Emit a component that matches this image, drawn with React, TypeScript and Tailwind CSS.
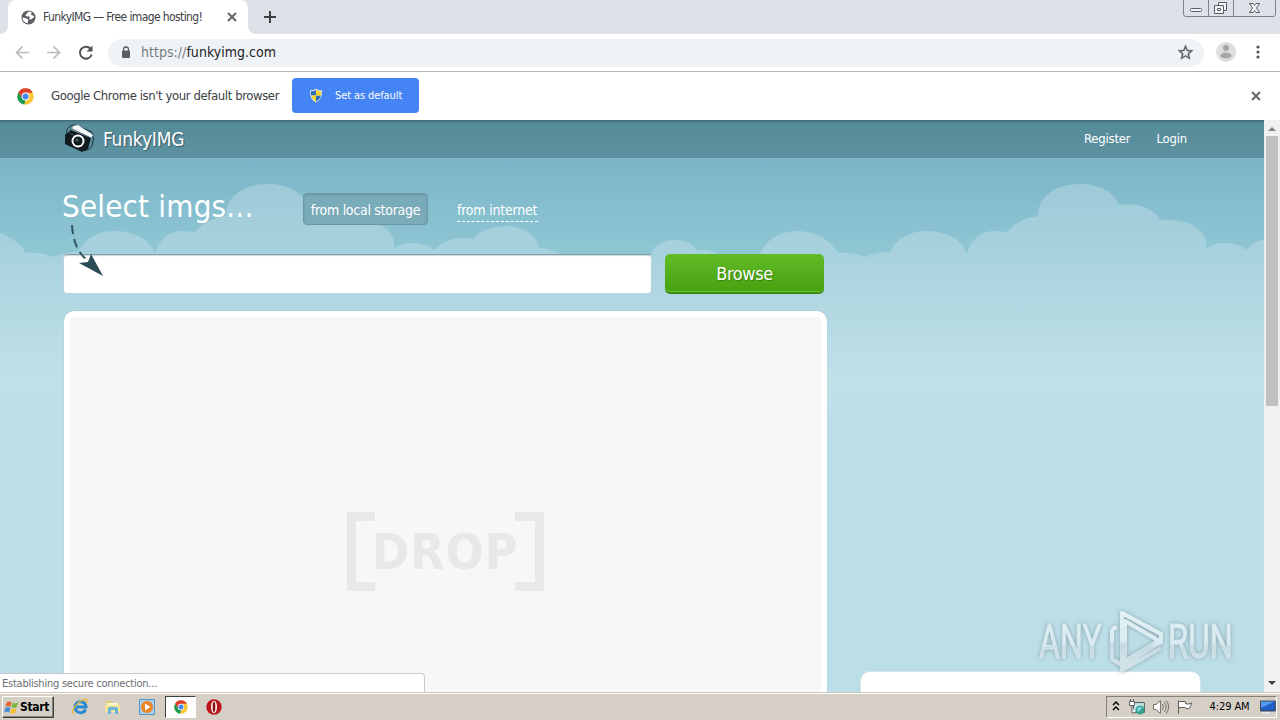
const hill =
  "M0 112C11 116 20 122 26 132C37 131 46 133 53 136C60 133 69 131 78 131C85 117 98 110 115 110C135 110 150 119 155 133C159 118 169 110 183 110L195 111C203 102 214 96 226 95C226 75 244 63 268 63C287 63 302 71 307 84C324 81 342 87 348 99C370 97 397 105 394 128C404 120 424 120 434 129C441 120 457 115 474 118C480 109 492 105 506 105C524 105 537 115 539 127C546 127 554 129 558 133L651 135C653 124 662 119 675 119C686 119 694 124 696 129C704 128 713 130 718 133L760 133C767 117 781 110 800 110L812 112L812 320L0 320Z"

function ChromeIcon({ className }: { className: string }) {
  return (
    <svg viewBox="0 0 24 24" className={className}>
      <circle cx="12" cy="12" r="11.5" fill="#fbc634" />
      <path d="M12 12L7.200 14.800L2 6.300A11.500 11.500 0 0 1 22.200 6.600H12Z" fill="#de3c30" />
      <path d="M2 6.300L7.300 14.800L12 17.400L10.200 23.400A11.500 11.500 0 0 1 2 6.300Z" fill="#189b55" />
      <circle cx="12" cy="12" r="5.500" fill="#fff" />
      <circle cx="12" cy="12" r="4.300" fill="#4688f1" />
    </svg>
  )
}

function Close({ className }: { className: string }) {
  return (
    <svg viewBox="0 0 10 10" className={className} fill="none" stroke="#5f6368" strokeWidth="1.900">
      <path d="M1 1L9 9M9 1L1 9" />
    </svg>
  )
}

function TabStrip() {
  return (
    <div className="flex h-[34px] shrink-0 bg-[#dee1e8]">
      <div className="flex w-2 items-end bg-white">
        <div className="h-full w-2 rounded-br-lg bg-[#dee1e8]" />
      </div>
      <div className="flex w-[240px] items-center rounded-t-lg bg-white pl-[13px]">
        <svg viewBox="0 0 16 16" className="h-[15px] w-[15px]">
          <circle cx="8" cy="8" r="7.500" fill="#5a5e63" />
          <path d="M8.500 1.500C6 2 7.500 4 5.500 4.500C4 5 5 7 7 6.800C9 6.500 10 7.500 9 9C8 10 10 11 11.500 9.500C13 8.500 14 8 14 6.500C13 5.500 11 6 10.500 4.500C11 3.500 12 3 11 2ZM1.700 8C3 8 5.500 9 7 9.500C8.500 10.500 7 11.500 7.500 14C4 14 1.500 11 1.700 8Z" fill="#fff" />
        </svg>
        <span className="ml-[7px] w-[170px] text-[12px] tracking-[-0.610px] text-[#3c4043]">FunkyIMG — Free image hosting!</span>
        <Close className="ml-[14px] h-[10px] w-[10px]" />
      </div>
      <div className="w-2 bg-white">
        <div className="h-full w-2 rounded-bl-lg bg-[#dee1e8]" />
      </div>
      <svg viewBox="0 0 12 12" className="mt-[11px] ml-2 h-3 w-3" stroke="#3c4043" strokeWidth="2">
        <path d="M6 0V12M0 6H12" />
      </svg>
      <svg viewBox="0 0 93 17" className="ml-auto mr-1 h-[17px] w-[93px]" fill="none" stroke="#7c818c">
        <path d="M.5 0V14Q.5 16.500 3 16.500H90Q92.500 16.500 92.500 14V0M25.500 0V16M50.500 0V16" />
        <g stroke="#585c66" fill="#f3f4f6">
          <rect x="7.500" y="8.500" width="11" height="3" rx="1" />
          <path d="M35.500 2.500H43.500V10.500H35.500Z" />
          <path d="M31.500 5.500H40.500V13.500H31.500Z" />
          <path d="M34.500 8.500H37.500V10.500H34.500Z" />
          <path d="M66.500 3.500H70L71.500 5.500L73 3.500H76.500L73.500 8L76.500 12.500H73L71.500 10.500L70 12.500H66.500L69.500 8Z" />
        </g>
      </svg>
    </div>
  )
}

function Toolbar() {
  return (
    <div className="flex h-[38px] shrink-0 items-center border-b border-[#b4b4b7] bg-white pl-[15px]">
      <svg viewBox="0 0 80 16" className="h-4 w-20" fill="none" stroke="#b8babd" strokeWidth="1.700">
        <path d="M14 7.500H1.500M7.500 1.500L1.500 7.500L7.500 13.500M32 7.500H44.500M38.500 1.500L44.500 7.500L38.500 13.500" />
        <path d="M75.500 3.700A6 6 0 1 0 76.700 9.500" stroke="#505459" strokeWidth="2" />
        <path d="M77.500 .5V6.500H71.500Z" fill="#505459" stroke="none" />
      </svg>
      <div className="ml-[13px] flex h-7 w-[1096px] items-center rounded-full bg-[#f0f3f6] pl-[13px] pr-[10px]">
        <svg viewBox="0 0 10 12" className="mb-[2px] h-3 w-[10px]">
          <rect x="1" y="4.500" width="8" height="7.500" rx="1" fill="#5a5e63" />
          <path d="M2.500 5V3.500A2.500 2.500 0 0 1 7.500 3.500V5" fill="none" stroke="#5a5e63" strokeWidth="1.300" />
        </svg>
        <span className="ml-[10px] text-[14px] tracking-[0.030px] text-[#202124]"><span className="text-[#767b80]">https://</span>funkyimg.com</span>
        <svg viewBox="1 1 22 22" className="mb-[1px] ml-auto h-[17px] w-[17px]" fill="#5a5e63" stroke="#5a5e63" strokeWidth=".4">
          <path d="M22 9.240l-7.190-.62L12 2 9.190 8.630 2 9.240l5.460 4.730L5.820 21 12 17.270 18.180 21l-1.630-7.030L22 9.240zM12 15.400l-3.760 2.270 1-4.280-3.320-2.880 4.380-.38L12 6.100l1.710 4.040 4.380.38-3.320 2.880 1 4.280L12 15.400z" />
        </svg>
      </div>
      <svg viewBox="0 0 20 20" className="mb-[2px] ml-3 h-5 w-5">
        <circle cx="10" cy="10" r="10" fill="#dedede" />
        <circle cx="10" cy="6" r="3" fill="#a5a5a5" />
        <ellipse cx="10" cy="13.500" rx="5.500" ry="3" fill="#a5a5a5" />
      </svg>
      <svg viewBox="0 0 4 14" className="mb-[1px] ml-5 h-[14px] w-1" fill="#505459">
        <circle cx="2" cy="2" r="1.600" />
        <circle cx="2" cy="7" r="1.600" />
        <circle cx="2" cy="12" r="1.600" />
      </svg>
    </div>
  )
}

function InfoBar() {
  return (
    <div className="flex h-[48px] shrink-0 items-center bg-white pl-[17px]">
      <ChromeIcon className="h-[17px] w-[17px]" />
      <span className="ml-[17px] w-[241px] text-[13px] tracking-[-0.410px] text-[#3c4043]">Google Chrome isn't your default browser</span>
      <button className="mt-[6px] flex h-[35px] w-[127px] items-center self-start rounded bg-[#4484f4] pl-[17px] text-[11px] text-white">
        <svg viewBox="0 0 14 16" className="mr-3 h-[15px] w-[14px]">
          <path d="M7 .5C9 2 11 2.500 13.500 2.500C13.500 9 12 13 7 15.500C2 13 .5 9 .5 2.500C3 2.500 5 2 7 .5Z" fill="#d8e5f5" />
          <path d="M7 2V8H1.800C1.400 6 1.500 5 1.500 3.500C4 3.500 5.500 3 7 2ZM7 8H12.200C11.500 11 10 13 7 14.300Z" fill="#2e70b8" />
          <path d="M7 2V8H12.200C12.600 6 12.500 5 12.500 3.500C10 3.500 8.500 3 7 2ZM7 8H1.800C2.500 11 4 13 7 14.300Z" fill="#f5d32c" />
        </svg>
        <span className="pt-[1px] tracking-[-0.100px]">Set as default</span>
      </button>
      <Close className="ml-auto mr-[19px] h-[10px] w-[10px]" />
    </div>
  )
}

function Scenery() {
  return (
    <svg viewBox="0 -1 1264 572" className="absolute top-0 left-0 h-[572px] w-[1264px]">
      <defs>
        <linearGradient id="sky" gradientUnits="userSpaceOnUse" x1="0" y1="37" x2="0" y2="140">
          <stop offset="0" stopColor="#7ab5c7" />
          <stop offset="1" stopColor="#91c8d5" />
        </linearGradient>
        <linearGradient id="haze" gradientUnits="userSpaceOnUse" x1="0" y1="63" x2="0" y2="320">
          <stop offset="0" stopColor="#9ec9d7" />
          <stop offset="0.280" stopColor="#a8d2dd" />
          <stop offset="0.540" stopColor="#b6dae4" />
          <stop offset="0.750" stopColor="#c0e0e8" />
          <stop offset="1" stopColor="#bcdee7" />
        </linearGradient>
      </defs>
      <rect width="1264" height="571" fill="#bcdee7" />
      <rect width="1264" height="200" fill="url(#sky)" />
      <path d={hill} fill="url(#haze)" />
      <path d={hill} fill="url(#haze)" transform="translate(812)" />
      <path d="M811 114V320H813V114Z" fill="url(#haze)" />
    </svg>
  )
}

function Header() {
  return (
    <header className="relative flex h-[39px] shrink-0 items-center border-b border-[#88bac7] bg-linear-to-b from-[#558a99] to-[#5d92a1] pr-[77px] pl-16 text-white shadow-[inset_0_3px_3px_-2px_#365d68]">
      <svg viewBox="0 0 30 28" className="mb-[2px] h-7 w-[30px]">
        <path d="M4 13C0 6 5 1 11 1L28 8Q31 15 28 22Q24 28 17 26" fill="none" stroke="#1c3037" />
        <path d="M1 11L7 6L27 14L24 25L18 28L1 20Z" fill="#101b20" />
        <path d="M9 2L14 1L29 11L27 14L8 6Z" fill="#f4f7f8" />
        <path d="M8 5L27 14M5 9L12 12" stroke="#3c525a" />
        <circle cx="14" cy="17" r="6.500" fill="#fff" />
        <circle cx="14" cy="17" r="4.600" fill="#101b20" />
        <circle cx="13" cy="16" r="1.500" fill="#506069" />
      </svg>
      <span className="ml-[9px] text-[19px] tracking-[-0.200px] [text-shadow:1px_1px_1px_#315763]">FunkyIMG</span>
      <nav className="ml-auto flex gap-[26px] text-[13px] tracking-[-0.200px]">
        <a href="#">Register</a>
        <a href="#">Login</a>
      </nav>
    </header>
  )
}

function Uploader() {
  return (
    <main className="relative flex h-[533px] items-start overflow-hidden pl-[63px]">
      <div className="flex w-[764px] flex-col pt-[29px]">
        <div className="flex h-[66px] items-start">
          <h1 className="-mt-[2px] -ml-[1px] w-[241px] text-[31px] leading-[40px] tracking-[0.200px] text-white">Select imgs...</h1>
          <div className="mt-[5px] flex h-8 w-[125px] items-center justify-center rounded border border-[#6999a5] bg-[#7aabb8] pt-[2px] text-[14px] tracking-[-0.280px] text-white shadow-[inset_0_1px_2px_#6592a0]">from local storage</div>
          <a href="#" className="mt-[11px] ml-[29px] h-[23px] w-[81px] border-b border-dashed border-white text-[14px] leading-[22px] tracking-[-0.220px] whitespace-nowrap text-white">from internet</a>
        </div>
        <div className="flex h-10">
          <div className="h-10 w-[589px] rounded border border-[#bdd3d9] border-t-[#7f9da6] bg-white shadow-[inset_0_1px_1px_#d2d8da]" />
          <button className="ml-[13px] h-10 w-[159px] rounded-[5px] border-b-2 border-[#3b8b12] bg-linear-to-b from-[#61bc27] to-[#48a20e] text-[18px] tracking-[-0.400px] text-white shadow-[inset_0_-1px_0_#6dc238] [text-shadow:1px_1px_1px_#397c15]">Browse</button>
        </div>
        <div className="mt-[17px] ml-[1px] flex h-[460px] items-center justify-center rounded-t-[10px] border-[6px] border-white bg-[#f7f7f7] shadow-[0_0_1px_#8fb0b8]">
          <div className="mt-5 flex h-[79px] w-[198px] justify-between text-[#e8e8e8]">
            <div className="w-7 shrink-0 border-y-[9px] border-l-[9px] border-current" />
            <span className="-mx-2 text-center text-[50px] leading-[81px] font-bold tracking-[0.800px]">DROP</span>
            <div className="w-[29px] shrink-0 border-y-[9px] border-r-[9px] border-current" />
          </div>
        </div>
      </div>
      <div className="mt-[512px] ml-[33px] h-10 w-[341px] rounded-t-[10px] border border-[#d5e5e9] bg-white" />
      <svg viewBox="0 0 44 54" className="absolute top-[64px] left-[66px] h-[54px] w-11">
        <path d="M6 2C7 19 12 30 23 39" fill="none" stroke="#335761" strokeWidth="2" strokeDasharray="9 5" />
        <path d="M37 53L13 40L22 39L25 31Z" fill="#294c57" />
      </svg>
    </main>
  )
}

function Watermark() {
  return (
    <svg viewBox="0 0 204 70" className="absolute top-[605px] left-[1034px] h-[70px] w-[204px] opacity-75 drop-shadow-[0_0_2px_#778f98]">
      <defs>
        <linearGradient id="glass" x1="0" y1="0" x2="0" y2="1">
          <stop offset="0" stopColor="#f0f8fa" />
          <stop offset="0.550" stopColor="#e4f1f5" />
          <stop offset="0.600" stopColor="#c9dadf" />
          <stop offset="1" stopColor="#dce7ea" />
        </linearGradient>
      </defs>
      <g fill="url(#glass)" stroke="#e0edf1" strokeWidth="1" fontFamily="Roboto" fontSize="49">
        <text transform="translate(5 53) scale(.655 1)">ANY</text>
        <text transform="translate(134 53) scale(.67 1)">RUN</text>
      </g>
      <g fill="none" stroke="url(#glass)" strokeWidth="4" strokeLinejoin="round">
        <path d="M83 23Q78 22 78 27V54L88 60V8L127 29V34L91 56V16L127 37" />
        <path d="M88 8L127 29V37L88 61V65L127 43" />
      </g>
    </svg>
  )
}

function Scrollbar() {
  return (
    <div className="flex w-4 flex-col items-center bg-[#f1f1f1]">
      <svg viewBox="0 -1 16 16" className="h-4 w-4"><path d="M4 10L8 6L12 10Z" fill="#858585" /></svg>
      <div className="h-[270px] w-3 bg-[#c1c1c1]" />
      <svg viewBox="0 0 16 16" className="mt-auto h-4 w-4"><path d="M4 5H12L8 9Z" fill="#424242" /></svg>
    </div>
  )
}

function Taskbar() {
  return (
    <div className="flex h-7 shrink-0 items-center border-t border-[#c8c5c0] bg-[#d5cfc6] pl-[2px] shadow-[inset_0_1px_0_#fff]">
      <button className="mt-[1px] flex h-[22px] w-[52px] items-center border border-[#404040] border-t-white border-l-white pl-[1px] text-[12px] font-bold tracking-[-0.350px] text-black shadow-[inset_-1px_-1px_0_#85817a]">
        <svg viewBox="0 0 16 15" className="mr-[1px] h-[15px] w-[15px] shrink-0">
          <path d="M3 2Q6 0 8 2L7 7Q4 5 1.500 7Z" fill="#e3662e" />
          <path d="M9 2.500Q12 4 15 2L13.500 7Q11 9 8 7Z" fill="#75b743" />
          <path d="M1.300 8Q4 6 6.700 8L5.500 13Q3 11 0 13Z" fill="#4b8cda" />
          <path d="M7.800 8.500Q10 10 13.200 8L12 13Q9 15 6.500 13.300Z" fill="#f4bd31" />
        </svg>
        Start
      </button>
      <svg viewBox="0 0 18 18" className="mt-[1px] ml-[17px] h-[18px] w-[18px]" fill="none">
        <path d="M14.500 11.500A5.500 5.500 0 1 1 15 9H5" stroke="#258bd0" strokeWidth="3" />
        <path d="M3 15C-1 17 3 7 10 3C15 0 18 1 15 5" stroke="#e4b93e" strokeWidth="1.300" />
      </svg>
      <svg viewBox="0 0 18 18" className="mt-[1px] ml-[15px] h-[18px] w-[18px]">
        <path d="M2 3H7L8 5H15V14H2Z" fill="#e9cc68" />
        <path d="M3 5H14V8H3Z" fill="#fff9d6" />
        <path d="M1 7H16V14H1Z" fill="#f7e496" />
        <path d="M4 16V11Q4 9 6 9H12Q14 9 14 11V16H11V12H7V16Z" fill="#66b6d8" />
      </svg>
      <svg viewBox="0 0 18 18" className="mt-[1px] ml-4 h-[18px] w-[18px]">
        <path d="M1.500 1.500H16.500V16.500H1.500Z" fill="#a8cfee" stroke="#5793c3" />
        <circle cx="9" cy="9" r="6" fill="#f08320" />
        <path d="M7 5.500L12.500 9L7 12.500Z" fill="#fff" />
      </svg>
      <div className="mt-[1px] ml-[9px] flex h-[22px] w-[31px] items-center justify-center border border-white border-t-[#404040] border-l-[#404040] bg-white">
        <ChromeIcon className="h-[14px] w-[14px]" />
      </div>
      <svg viewBox="0 0 16 16" className="mt-[1px] ml-[10px] h-4 w-4">
        <circle cx="8" cy="8" r="7.700" fill="#b8151b" />
        <ellipse cx="8" cy="8" rx="3" ry="6.200" fill="#f8eeee" />
        <ellipse cx="8" cy="8" rx="1.300" ry="5.200" fill="#8c1114" />
      </svg>
      <div className="mt-[1px] mr-[3px] ml-auto flex h-[22px] w-[171px] items-center border border-white border-t-[#85817a] border-l-[#85817a] pl-[5px] text-[12px] text-black">
        <svg viewBox="0 0 8 10" className="mb-[2px] h-[10px] w-2" fill="none" stroke="#000" strokeWidth="1.400"><path d="M1 4L4 1L7 4M1 9L4 6L7 9" /></svg>
        <svg viewBox="0 0 18 18" className="ml-[8px] h-[18px] w-[18px]">
          <path d="M5.500 4.500H16.500V14.500H5.500Z" fill="#c9e2ea" stroke="#4a575b" />
          <path d="M1.500 3.500H6.500V7.500H1.500ZM2.500 1V4M5.500 1V4M4 7.500V15H7" fill="#fff" stroke="#5a5a5a" />
          <circle cx="12" cy="12" r="4.500" fill="#36a18b" />
          <path d="M9 11Q12 7 14 10Q12 13 10 14Z" fill="#83d5e8" />
        </svg>
        <svg viewBox="0 0 18 18" className="ml-[6px] h-[18px] w-[18px]" fill="none" stroke="#706e6a">
          <path d="M1.500 6.500H4L8.500 2.500V15.500L4 11.500H1.500Z" fill="#fff" />
          <path d="M10.500 6Q12.500 9 10.500 12M12.500 4Q16 9 12.500 14M14.500 2.500Q19 9 14.500 15.500" />
        </svg>
        <svg viewBox="0 0 18 18" className="ml-[6px] h-[18px] w-[18px]" fill="#fff" stroke="#5d5b58">
          <path d="M2.500 2.500V16M3 3.500H9.500V5.500Q12 7 16 5L13.500 10.500Q11 11.500 9 9.500H3" />
        </svg>
        <span className="ml-4 w-[46px] text-[11px] tracking-[-0.100px] whitespace-nowrap">4:29 AM</span>
        <svg viewBox="0 0 16 14" className="ml-[5px] h-[14px] w-4">
          <path d="M.5 1H15.500V11H.5Z" fill="#1f5fc4" stroke="#3a4250" />
          <path d="M1 1.500H15L1 8Z" fill="#5496e8" />
          <path d="M2 12H10V13.500H2Z" fill="#e2eef8" />
        </svg>
      </div>
    </div>
  )
}

export default function App() {
  return (
    <div className="relative flex h-[720px] w-[1280px] flex-col overflow-hidden bg-white font-['DejaVu_Sans_Condensed','Noto_Sans',sans-serif]">
      <TabStrip />
      <Toolbar />
      <InfoBar />
      <div className="flex h-[572px] shrink-0">
        <div className="relative h-[572px] w-[1264px] overflow-hidden">
          <Scenery />
          <Header />
          <Uploader />
          <div className="absolute bottom-0 left-0 h-[19px] w-[425px] rounded-tr border-t border-r border-[#c9c9c9] bg-white pl-[2px] text-[11px] leading-[19px] tracking-[-0.240px] text-[#6b6e72]">Establishing secure connection...</div>
        </div>
        <Scrollbar />
      </div>
      <Taskbar />
      <Watermark />
    </div>
  )
}
